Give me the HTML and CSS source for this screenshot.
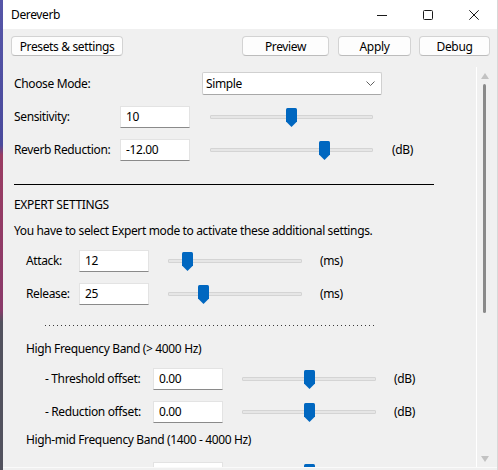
FILE: index.html
```html
<!DOCTYPE html>
<html>
<head>
<meta charset="utf-8">
<title>Dereverb</title>
<link rel="stylesheet" href="styles.css">
</head>
<body>
<div class="desk">
  <div class="window">
    <div class="titlebar">
      <span class="title">Dereverb</span>
      <div class="controls">
        <span class="ctl"><svg width="10" height="10" viewBox="0 0 10 10"><path d="M0 5.5H10" stroke="#1a1a1a" stroke-width="1"/></svg></span>
        <span class="ctl"><svg width="10" height="10" viewBox="0 0 10 10"><rect x="0.5" y="0.5" width="9" height="9" rx="1" fill="none" stroke="#1a1a1a" stroke-width="1"/></svg></span>
        <span class="ctl"><svg width="10" height="10" viewBox="0 0 10 10"><path d="M0.3 0.3L9.7 9.7M9.7 0.3L0.3 9.7" stroke="#1a1a1a" stroke-width="1"/></svg></span>
      </div>
    </div>
    <div class="toolbar">
      <button class="btn presets">Presets &amp; settings</button>
      <div class="spacer"></div>
      <button class="btn preview">Preview</button>
      <button class="btn apply">Apply</button>
      <button class="btn debug">Debug</button>
    </div>
    <div class="panel">
      <div class="content">
        <div class="row top">
          <span class="label mode-label">Choose Mode:</span>
          <div class="select">
            <span>Simple</span>
            <svg width="9" height="5" viewBox="0 0 9 5"><path d="M0.5 0.5L4.5 4.5L8.5 0.5" fill="none" stroke="#606060" stroke-width="1"/></svg>
          </div>
        </div>
        <div class="row top">
          <span class="label">Sensitivity:</span>
          <div class="input">10</div>
          <div class="slider wide" style="--v:0.5"><div class="track"></div><svg class="thumb" width="11" height="19" viewBox="0 0 11 19"><path d="M1.5 0H9.5Q11 0 11 1.5V13.5L5.5 19L0 13.5V1.5Q0 0 1.5 0Z" fill="#0067c0"/></svg></div>
        </div>
        <div class="row top">
          <span class="label">Reverb Reduction:</span>
          <div class="input">-12.00</div>
          <div class="slider wide" style="--v:0.72"><div class="track"></div><svg class="thumb" width="11" height="19" viewBox="0 0 11 19"><path d="M1.5 0H9.5Q11 0 11 1.5V13.5L5.5 19L0 13.5V1.5Q0 0 1.5 0Z" fill="#0067c0"/></svg></div>
          <span class="unit">(dB)</span>
        </div>
        <div class="rule"></div>
        <div class="text-row">EXPERT SETTINGS</div>
        <div class="text-row">You have to select Expert mode to activate these additional settings.</div>
        <div class="row expert">
          <span class="label">Attack:</span>
          <div class="input">12</div>
          <div class="slider" style="--v:0.114"><div class="track"></div><svg class="thumb" width="11" height="19" viewBox="0 0 11 19"><path d="M1.5 0H9.5Q11 0 11 1.5V13.5L5.5 19L0 13.5V1.5Q0 0 1.5 0Z" fill="#0067c0"/></svg></div>
          <span class="unit">(ms)</span>
        </div>
        <div class="row expert">
          <span class="label">Release:</span>
          <div class="input">25</div>
          <div class="slider" style="--v:0.244"><div class="track"></div><svg class="thumb" width="11" height="19" viewBox="0 0 11 19"><path d="M1.5 0H9.5Q11 0 11 1.5V13.5L5.5 19L0 13.5V1.5Q0 0 1.5 0Z" fill="#0067c0"/></svg></div>
          <span class="unit">(ms)</span>
        </div>
        <div class="dots-row"><div class="dots"></div></div>
        <div class="band-title first">High Frequency Band (&gt; 4000 Hz)</div>
        <div class="row band">
          <span class="label">- Threshold offset:</span>
          <div class="input">0.00</div>
          <div class="slider" style="--v:0.5"><div class="track"></div><svg class="thumb" width="11" height="19" viewBox="0 0 11 19"><path d="M1.5 0H9.5Q11 0 11 1.5V13.5L5.5 19L0 13.5V1.5Q0 0 1.5 0Z" fill="#0067c0"/></svg></div>
          <span class="unit">(dB)</span>
        </div>
        <div class="row band">
          <span class="label">- Reduction offset:</span>
          <div class="input">0.00</div>
          <div class="slider" style="--v:0.5"><div class="track"></div><svg class="thumb" width="11" height="19" viewBox="0 0 11 19"><path d="M1.5 0H9.5Q11 0 11 1.5V13.5L5.5 19L0 13.5V1.5Q0 0 1.5 0Z" fill="#0067c0"/></svg></div>
          <span class="unit">(dB)</span>
        </div>
        <div class="band-title second">High-mid Frequency Band (1400 - 4000 Hz)</div>
        <div class="row band">
          <span class="label">- Threshold offset:</span>
          <div class="input">0.00</div>
          <div class="slider" style="--v:0.5"><div class="track"></div><svg class="thumb" width="11" height="19" viewBox="0 0 11 19"><path d="M1.5 0H9.5Q11 0 11 1.5V13.5L5.5 19L0 13.5V1.5Q0 0 1.5 0Z" fill="#0067c0"/></svg></div>
          <span class="unit">(dB)</span>
        </div>
      </div>
      <div class="scrollbar">
        <svg class="arrow" width="8" height="6" viewBox="0 0 8 6"><path d="M4 0L8 6H0Z" fill="#c2c2c2"/></svg>
        <div class="sthumb"></div>
        <svg class="arrow down" width="8" height="6" viewBox="0 0 8 6"><path d="M0 0H8L4 6Z" fill="#c2c2c2"/></svg>
      </div>
    </div>
  </div>
</div>
</body>
</html>
```

FILE: styles.css
```css
html, body {
  margin: 0;
  padding: 0;
}

body {
  width: 498px;
  height: 470px;
  overflow: hidden;
  font-family: "Segoe UI", "Noto Sans", sans-serif;
  font-size: 12px;
  letter-spacing: -0.36px;
  color: #000;
}

.desk {
  display: flex;
  width: 498px;
  height: 470px;
  background: linear-gradient(to bottom, #5656a8 0px, #4a4a9c 145px, #9a3c62 155px, #8a3a6a 310px, #52525e 322px, #52525e 470px);
}

.window {
  margin-left: 3px;
  width: 494px;
  height: 470px;
  background: #f0f0f0;
  border-right: 1px solid #d8d8d8;
  display: flex;
  flex-direction: column;
}

.titlebar {
  height: 29px;
  flex: none;
  background: #fff;
  display: flex;
  align-items: center;
}

.title {
  padding-left: 8px;
  flex: 1;
}

.controls {
  display: flex;
  height: 29px;
}

.ctl {
  width: 46px;
  display: flex;
  align-items: center;
  justify-content: center;
}

.toolbar {
  display: flex;
  padding: 7px 7px 0 8px;
  height: 20px;
  flex: none;
}

.spacer {
  flex: 1;
}

.btn {
  height: 20px;
  font-family: inherit;
  font-size: 12px;
  letter-spacing: inherit;
  color: #000;
  background: #fdfdfd;
  border: 1px solid #d3d3d3;
  border-bottom-color: #bcbcbc;
  border-radius: 4px;
  padding: 0;
  line-height: 17px;
}

.presets { width: 112px; }
.preview { width: 87px; }
.apply { width: 73px; margin-left: 9px; }
.debug { width: 71px; margin-left: 8px; }

.panel {
  margin-top: 11px;
  height: 400px;
  display: flex;
  flex: none;
  border-bottom: 1px solid #fafafa;
}

.content {
  width: 462px;
  padding-left: 11px;
  height: 400px;
  overflow: hidden;
}

.row {
  height: 33px;
  display: flex;
  align-items: center;
  white-space: nowrap;
}

.label {
  flex: none;
}

.top .label { width: 106px; }
.top .mode-label { width: 188px; }
.expert { padding-left: 12px; }
.expert .label { width: 53px; }
.band { padding-left: 31px; }
.band .label { width: 108px; }

.input {
  flex: none;
  box-sizing: border-box;
  width: 70px;
  height: 22px;
  padding-left: 5px;
  background: #fff;
  border: 1px solid #e3e3e3;
  border-bottom-color: #8a8a8a;
  line-height: 19px;
}

.select {
  flex: none;
  box-sizing: border-box;
  width: 180px;
  height: 23px;
  background: #fff;
  border: 1px solid #d0d0d0;
  border-bottom-color: #a8a8a8;
  border-radius: 2px;
  display: flex;
  align-items: center;
  justify-content: space-between;
  padding: 0 6px 0 3px;
}

.slider {
  position: relative;
  flex: none;
  width: 134px;
  height: 20px;
  margin-left: 19px;
}

.slider.wide {
  width: 163px;
  margin-left: 20px;
}

.track {
  position: absolute;
  left: 0;
  right: 0;
  top: 8px;
  height: 4px;
  box-sizing: border-box;
  background: #e6e6e6;
  border: 1px solid #d4d4d4;
  border-radius: 1px;
}

.thumb {
  position: absolute;
  top: 1px;
  left: calc(var(--v) * (100% - 11px));
}

.unit {
  margin-left: 18px;
}

.top .unit {
  margin-left: 19px;
}

.rule {
  width: 420px;
  height: 0;
  border-top: 1px solid #000;
  margin: 18px 0 7px;
}

.text-row {
  height: 26px;
  line-height: 26px;
  white-space: nowrap;
}

.dots-row {
  height: 30px;
  display: flex;
  align-items: center;
  padding-left: 31px;
}

.dots {
  width: 332px;
  height: 1px;
  background: repeating-linear-gradient(to right, #3a3a3a 0, #3a3a3a 1px, transparent 1px, transparent 4px);
}

.band-title {
  padding-left: 12px;
  white-space: nowrap;
}

.band-title.first {
  height: 22px;
  line-height: 18px;
}

.band-title.second {
  height: 28px;
  line-height: 24px;
}

.scrollbar {
  box-sizing: border-box;
  width: 21px;
  border-left: 1px solid #fff;
  display: flex;
  flex-direction: column;
  align-items: flex-start;
  padding-left: 4px;
}

.arrow {
  margin-top: 6px;
  flex: none;
}

.arrow.down {
  margin-top: auto;
  margin-bottom: 5px;
}

.sthumb {
  margin-top: 5px;
  margin-left: 2px;
  width: 3px;
  height: 229px;
  background: #8a8a8a;
  border-radius: 2px;
}
```
